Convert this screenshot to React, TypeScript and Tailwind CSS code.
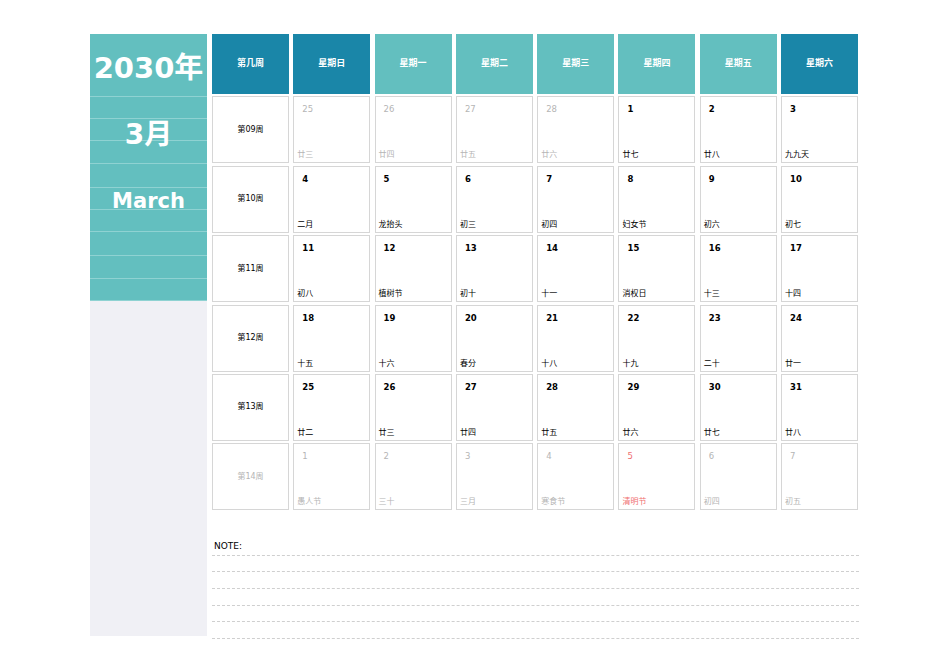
const F = { fontFamily: '"DejaVu Sans", "Noto Sans CJK SC", sans-serif' };

const HEAD: { t: string; dark: boolean }[] = [
  { t: "第几周", dark: true },
  { t: "星期日", dark: true },
  { t: "星期一", dark: false },
  { t: "星期二", dark: false },
  { t: "星期三", dark: false },
  { t: "星期四", dark: false },
  { t: "星期五", dark: false },
  { t: "星期六", dark: true },
];

type Day = { n: number; l: string; dim?: boolean; red?: boolean };

const WEEKS: { w: string; dim?: boolean; days: Day[] }[] = [
  {
    w: "第09周",
    days: [
      { n: 25, l: "廿三", dim: true },
      { n: 26, l: "廿四", dim: true },
      { n: 27, l: "廿五", dim: true },
      { n: 28, l: "廿六", dim: true },
      { n: 1, l: "廿七" },
      { n: 2, l: "廿八" },
      { n: 3, l: "九九天" },
    ],
  },
  {
    w: "第10周",
    days: [
      { n: 4, l: "二月" },
      { n: 5, l: "龙抬头" },
      { n: 6, l: "初三" },
      { n: 7, l: "初四" },
      { n: 8, l: "妇女节" },
      { n: 9, l: "初六" },
      { n: 10, l: "初七" },
    ],
  },
  {
    w: "第11周",
    days: [
      { n: 11, l: "初八" },
      { n: 12, l: "植树节" },
      { n: 13, l: "初十" },
      { n: 14, l: "十一" },
      { n: 15, l: "消权日" },
      { n: 16, l: "十三" },
      { n: 17, l: "十四" },
    ],
  },
  {
    w: "第12周",
    days: [
      { n: 18, l: "十五" },
      { n: 19, l: "十六" },
      { n: 20, l: "春分" },
      { n: 21, l: "十八" },
      { n: 22, l: "十九" },
      { n: 23, l: "二十" },
      { n: 24, l: "廿一" },
    ],
  },
  {
    w: "第13周",
    days: [
      { n: 25, l: "廿二" },
      { n: 26, l: "廿三" },
      { n: 27, l: "廿四" },
      { n: 28, l: "廿五" },
      { n: 29, l: "廿六" },
      { n: 30, l: "廿七" },
      { n: 31, l: "廿八" },
    ],
  },
  {
    w: "第14周",
    dim: true,
    days: [
      { n: 1, l: "愚人节", dim: true },
      { n: 2, l: "三十", dim: true },
      { n: 3, l: "三月", dim: true },
      { n: 4, l: "寒食节", dim: true },
      { n: 5, l: "清明节", red: true },
      { n: 6, l: "初四", dim: true },
      { n: 7, l: "初五", dim: true },
    ],
  },
];

const LINES = [22, 22, 23, 24, 22, 22, 24, 23, 22];

export default function App() {
  return (
    <div className="w-[950px] h-[672px] bg-white relative" style={F}>
      <div className="flex pt-[34px] pl-[90px] gap-[5px]">
        <div className="w-[117px] h-[602px] flex flex-col bg-[#f0f0f5]">
          <div className="relative bg-[#63bfbf] h-[267px] flex flex-col">
            <div className="h-[63px] border-b border-[#8fd2d2]" />
            {LINES.map((h, i) => (
              <div key={i} style={{ height: h }} className="border-b border-[#8fd2d2] last:border-b-0" />
            ))}
            <div className="absolute left-0 right-0 top-[13px] text-center text-white font-bold text-[29px]">2030年</div>
            <div className="absolute left-0 right-0 top-[80px] text-center text-white font-bold text-[28px]">3月</div>
            <div className="absolute left-0 right-0 top-[152px] text-center text-white font-bold text-[21px]">March</div>
          </div>
        </div>
        <div className="w-[647px]">
          <div className="grid grid-cols-[repeat(8,77px)] gap-x-[4.3px] gap-y-[2.4px] grid-rows-[60px_repeat(6,67px)]">
            {HEAD.map((h) => (
              <div
                key={h.t}
                className={`flex items-center justify-center text-white font-bold text-[9px] ${h.dark ? "bg-[#1a86a8]" : "bg-[#63bfbf]"}`}
              >
                {h.t}
              </div>
            ))}
            {WEEKS.map((wk) => (
              <>
                <div
                  key={wk.w}
                  className={`border border-[#d6d6d6] flex items-center justify-center text-[8px] ${wk.dim ? "text-[#b5b5b5]" : "text-black"}`}
                >
                  {wk.w}
                </div>
                {wk.days.map((d, i) => (
                  <div key={wk.w + i} className="border border-[#d6d6d6] flex flex-col justify-between pt-[6px] pb-[1px]">
                    <div
                      className={`pl-[8px] text-[8.5px] ${d.red ? "text-[#f07070]" : d.dim ? "text-[#b5b5b5]" : "text-black font-bold"}`}
                    >
                      {d.n}
                    </div>
                    <div
                      className={`pl-[3px] text-[8px] ${d.red ? "text-[#f07070]" : d.dim ? "text-[#b5b5b5]" : "text-black"}`}
                    >
                      {d.l}
                    </div>
                  </div>
                ))}
              </>
            ))}
          </div>
          <div className="mt-[30px] text-[9px] text-black pl-[2px]">NOTE:</div>
          <div className="flex flex-col">
            {[0, 1, 2, 3, 4, 5].map((i) => (
              <div key={i} className={`border-b border-dashed border-[#cfcfcf] ${i === 0 ? "h-[2px]" : "h-[16.6px]"}`} />
            ))}
          </div>
        </div>
      </div>
    </div>
  );
}
